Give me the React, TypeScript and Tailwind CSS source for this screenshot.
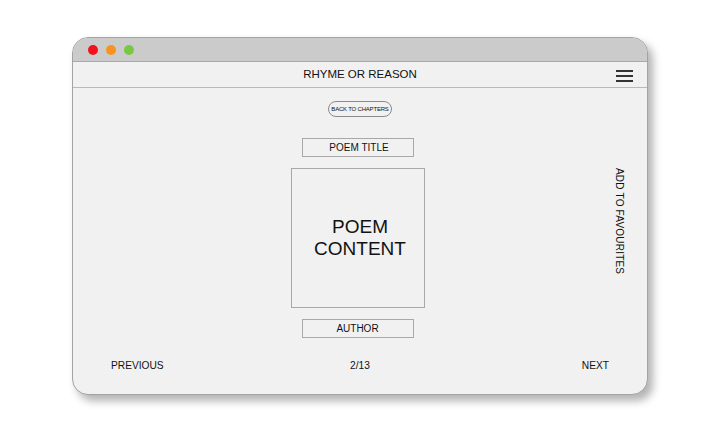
export default function App() {
  return (
    <div className="w-[720px] h-[432px] bg-white pt-[37px] font-['Liberation_Sans',Arial,sans-serif] text-[#111]">
      <div className="mx-auto w-[576px] h-[358px] rounded-[16px] border border-[#a3a3a3] bg-[#f1f1f1] overflow-hidden shadow-[5px_6px_8px_rgba(0,0,0,0.3)] flex flex-col">
        {/* title bar */}
        <div className="h-[24px] bg-[#cbcbcb] border-b border-[#a9a9a9] flex items-center gap-[8px] pl-[15px] shrink-0">
          <span className="w-[10px] h-[10px] rounded-full bg-[#f2121d]" />
          <span className="w-[10px] h-[10px] rounded-full bg-[#f7931e]" />
          <span className="w-[10px] h-[10px] rounded-full bg-[#79c843]" />
        </div>

        {/* header */}
        <div className="relative h-[26px] border-b border-[#b9b9b9] flex items-center justify-center shrink-0">
          <span className="text-[11.5px]">RHYME OR REASON</span>
          <div className="absolute right-[14px] top-[8px] flex flex-col gap-[3px]">
            <span className="w-[17px] h-[2px] bg-[#333]" />
            <span className="w-[17px] h-[2px] bg-[#333]" />
            <span className="w-[17px] h-[2px] bg-[#333]" />
          </div>
        </div>

        {/* body */}
        <div className="relative flex-1 flex flex-col">
          <div className="flex flex-col items-center pt-[13px] pr-[5px]">
            <div className="ml-[5px] w-[64px] h-[16px] rounded-full border border-[#8a8a8a] flex items-center justify-center text-[6px] tracking-[-0.2px]">
              BACK TO CHAPTERS
            </div>
            <div className="mt-[21px] w-[112px] h-[19px] border border-[#a8a8a8] flex items-center justify-center pl-[3px] text-[10px]">
              POEM TITLE
            </div>
            <div className="mt-[11px] w-[134px] h-[140px] border border-[#a8a8a8] flex items-center justify-center pl-[5px] text-center text-[19px] leading-[22px]">
              POEM
              <br />
              CONTENT
            </div>
            <div className="mt-[11px] w-[112px] h-[19px] border border-[#a8a8a8] flex items-center justify-center text-[10px]">
              AUTHOR
            </div>
          </div>

          <div className="absolute right-[20px] top-[80px] [writing-mode:vertical-rl] text-[10px] tracking-[0.2px]">
            ADD TO FAVOURITES
          </div>

          <div className="mt-[20px] grid grid-cols-3 items-center px-[38px] text-[10.2px]">
            <span className="justify-self-start">PREVIOUS</span>
            <span className="justify-self-center">2/13</span>
            <span className="justify-self-end">NEXT</span>
          </div>
        </div>
      </div>
    </div>
  );
}
